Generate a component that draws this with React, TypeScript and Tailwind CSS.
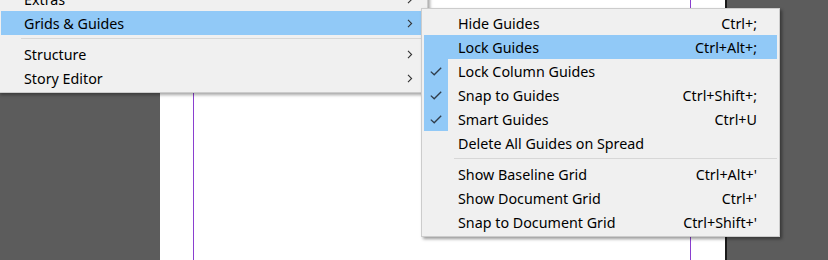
import React from 'react'

type SubItem = {
  label: string
  shortcut?: string
  checked?: boolean
  active?: boolean
  separator?: boolean
}

const subItems: SubItem[] = [
  { label: 'Hide Guides', shortcut: 'Ctrl+;' },
  { label: 'Lock Guides', shortcut: 'Ctrl+Alt+;', active: true },
  { label: 'Lock Column Guides', checked: true },
  { label: 'Snap to Guides', shortcut: 'Ctrl+Shift+;', checked: true },
  { label: 'Smart Guides', shortcut: 'Ctrl+U', checked: true },
  { label: 'Delete All Guides on Spread' },
  { label: '', separator: true },
  { label: 'Show Baseline Grid', shortcut: "Ctrl+Alt+'" },
  { label: 'Show Document Grid', shortcut: "Ctrl+'" },
  { label: 'Snap to Document Grid', shortcut: "Ctrl+Shift+'" },
]

const Chevron = () => (
  <svg width="6" height="9" viewBox="0 0 6 9" className="text-[#333]">
    <path d="M1 0.8 L4.6 4.5 L1 8.2" fill="none" stroke="currentColor" strokeWidth="1.1" />
  </svg>
)

const Check = () => (
  <svg width="12" height="9" viewBox="0 0 12 9" className="text-[#2f3c4a]">
    <path d="M0.8 4.6 L4.2 7.8 L11.2 0.8" fill="none" stroke="currentColor" strokeWidth="1.3" />
  </svg>
)

function MainRow({ label, active }: { label: string; active?: boolean }) {
  return (
    <div className={`flex items-center h-6 pl-[23px] pr-[12px] ${active ? 'bg-[#91c9f7]' : ''}`}>
      <span className="flex-1 pt-px">{label}</span>
      <Chevron />
    </div>
  )
}

export default function App() {
  return (
    <div
      className="relative w-[828px] h-[260px] overflow-hidden bg-[#5c5c5c] text-[14.3px] text-black"
      style={{ fontFamily: '"Noto Sans", "Open Sans", sans-serif' }}
    >
      {/* document canvas */}
      <div className="flex h-full">
        <div className="w-[160px] bg-[#5c5c5c]" />
        <div className="relative w-[565px] bg-white">
          <div className="absolute top-0 bottom-0 left-[33px] w-px bg-[#8a3fcf]" />
          <div className="absolute top-0 bottom-0 left-[530px] w-px bg-[#8a3fcf]" />
        </div>
        <div className="w-[2px] bg-[#1a1a1a]" />
        <div className="flex-1 bg-[#5c5c5c]" />
      </div>

      {/* parent menu */}
      <div className="absolute left-[-2px] top-[-16px] w-[430px] bg-[#f0f0f0] border border-[#cccccc] p-[2px] shadow-[2px_2px_3px_rgba(0,0,0,0.35)]">
        <MainRow label="Extras" />
        <MainRow label="Grids & Guides" active />
        <div className="h-[7px] flex items-center pl-[20px]">
          <div className="w-full h-px bg-[#d7d7d7]" />
        </div>
        <MainRow label="Structure" />
        <MainRow label="Story Editor" />
      </div>

      {/* submenu */}
      <div className="absolute left-[421px] top-[8px] w-[359px] bg-[#f0f0f0] border border-[#cccccc] p-[2px] shadow-[2px_2px_3px_rgba(0,0,0,0.4)]">
        {subItems.map((item, i) =>
          item.separator ? (
            <div key={i} className="h-[7px] flex items-center pl-[30px]">
              <div className="w-full h-px bg-[#d7d7d7]" />
            </div>
          ) : (
            <div key={i} className={`flex items-center h-6 ${item.active ? 'bg-[#91c9f7]' : ''}`}>
              <div
                className={`w-6 h-6 flex items-center justify-center ${item.checked ? 'bg-[#91c9f7]' : ''}`}
              >
                {item.checked && <Check />}
              </div>
              <span className="flex-1 pl-[10px] pt-px">{item.label}</span>
              {item.shortcut && <span className="pr-[20px] pt-px">{item.shortcut}</span>}
            </div>
          )
        )}
      </div>
    </div>
  )
}
